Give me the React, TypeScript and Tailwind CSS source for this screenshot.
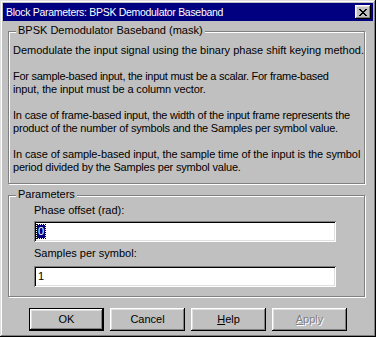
import React from 'react'

const raised = 'shadow-[inset_-1px_-1px_#000,inset_1px_1px_#fff,inset_-2px_-2px_#808080,inset_2px_2px_#dfdfdf]'
const sunken = 'shadow-[inset_1px_1px_#808080,inset_-1px_-1px_#fff,inset_2px_2px_#000,inset_-2px_-2px_#dfdfdf]'
const etched = 'border border-[#808080] shadow-[inset_1px_1px_#fff,1px_1px_#fff]'

const helpLines: [string, string][] = [
  ['Demodulate the input signal using the binary phase shift keying method.', ''],
  ['', ''],
  ['For sample-based input, the input must be a scalar. For frame-based', 'tracking-[-0.28px]'],
  ['input, the input must be a column vector.', 'tracking-[-0.12px]'],
  ['', ''],
  ['In case of frame-based input, the width of the input frame represents the', 'tracking-[-0.2px]'],
  ['product of the number of symbols and the Samples per symbol value.', 'tracking-[-0.2px]'],
  ['', ''],
  ['In case of sample-based input, the sample time of the input is the symbol', 'tracking-[-0.11px]'],
  ['period divided by the Samples per symbol value.', 'tracking-[-0.19px]'],
]

function GroupBox({ label, className, children }: { label: string; className: string; children: React.ReactNode }) {
  return (
    <div className={`relative ${etched} ${className}`}>
      <span className="absolute left-[7px] top-[-8px] bg-[#c0c0c0] px-[2px] leading-[13px]">{label}</span>
      {children}
    </div>
  )
}

function Button({ children, isDefault, disabled }: { children: React.ReactNode; isDefault?: boolean; disabled?: boolean }) {
  return (
    <div className={`w-[75px] h-[23px] ${isDefault ? 'border border-black' : ''}`}>
      <div className={`w-full h-full flex items-center justify-center ${raised} ${disabled ? 'text-[#808080] [text-shadow:1px_1px_#fff]' : ''}`}>
        {children}
      </div>
    </div>
  )
}

export default function App() {
  return (
    <div
      className="w-[376px] h-[337px] bg-[#c0c0c0] p-[3px] flex flex-col text-[11px] text-black shadow-[inset_-1px_-1px_#000,inset_1px_1px_#dfdfdf,inset_-2px_-2px_#808080,inset_2px_2px_#fff]"
      style={{ fontFamily: '"Liberation Sans", Arial, sans-serif' }}
    >
      {/* title bar */}
      <div className="h-[18px] bg-[#000080] flex items-center justify-between pl-[3px] pr-[2px]">
        <span className="text-white text-[10.5px] tracking-[-0.3px] leading-none">Block Parameters: BPSK Demodulator Baseband</span>
        <div className={`w-[16px] h-[14px] bg-[#c0c0c0] flex items-center justify-center ${raised}`}>
          <svg width="8" height="7" viewBox="0 0 8 7" shapeRendering="crispEdges">
            <path d="M0 0h2v1h-2zM6 0h2v1h-2zM1 1h2v1h-2zM5 1h2v1h-2zM2 2h4v1h-4zM3 3h2v1h-2zM2 4h4v1h-4zM1 5h2v1h-2zM5 5h2v1h-2zM0 6h2v1h-2zM6 6h2v1h-2z" fill="#000" />
          </svg>
        </div>
      </div>

      <div className="flex flex-col pl-[5px]">
        <GroupBox label="BPSK Demodulator Baseband (mask)" className="mt-[10px] w-[357px] h-[153px]">
          <div className="pl-[4px] pt-[12px] leading-[13px] whitespace-pre">
            {helpLines.map(([text, tracking], i) => (
              <div key={i} className={`h-[13px] ${tracking}`}>{text}</div>
            ))}
          </div>
        </GroupBox>

        <GroupBox label="Parameters" className="mt-[11px] w-[357px] h-[102px]">
          <div className="pl-[25px] pt-[8px] flex flex-col">
            <span className="leading-[13px]">Phase offset (rad):</span>
            <div className={`mt-[4px] w-[302px] h-[21px] bg-white flex items-center pl-[3px] ${sunken}`}>
              <span className="bg-[#000080] text-white leading-[13px] px-[1px] outline-1 outline-dotted outline-black">0</span>
            </div>
            <span className="mt-[5px] leading-[13px]">Samples per symbol:</span>
            <div className={`mt-[6px] w-[302px] h-[21px] bg-white flex items-center pl-[4px] ${sunken}`}>
              <span className="leading-[13px]">1</span>
            </div>
          </div>
        </GroupBox>

        <div className="mt-[11px] pl-[21px] flex gap-[6px]">
          <Button isDefault>OK</Button>
          <Button>Cancel</Button>
          <Button><span><u>H</u>elp</span></Button>
          <Button disabled><span><u>A</u>pply</span></Button>
        </div>
      </div>
    </div>
  )
}
